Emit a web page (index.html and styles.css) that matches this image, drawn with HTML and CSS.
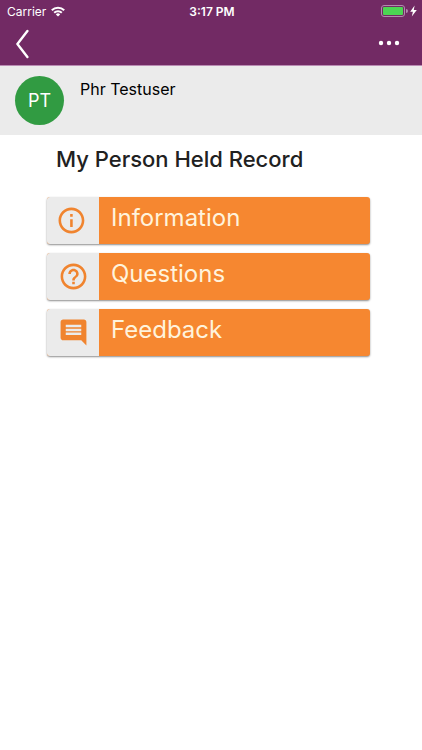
FILE: index.html
```html
<!DOCTYPE html>
<html lang="en">

<head>
    <title>My Person Held Record</title>
    <meta charset="utf-8">
    <meta name="viewport" content="width=device-width, initial-scale=1.0">
    <link rel="stylesheet" href="styles.css">
</head>

<body>

    <header>
        <div class="status">
            <div class="carrier">
                <span>Carrier</span>
                <svg width="14" height="11" viewBox="0 0 14 11" fill="none" stroke="#fff" stroke-width="2">
                    <path d="M.8 4.3a8.8 8.8 0 0 1 12.4 0M3.2 6.8a5.4 5.4 0 0 1 7.6 0" />
                    <path d="M7 10.6L4.8 8.4a3.1 3.1 0 0 1 4.4 0z" fill="#fff" stroke="none" />
                </svg>
            </div>
            <time>3:17 PM</time>
            <div class="power">
                <svg width="36" height="12" viewBox="0 0 36 12">
                    <rect x=".5" y=".5" width="23" height="11" rx="2.5" fill="none" stroke="#b28aae" />
                    <rect x="2" y="2" width="20" height="8" rx="1" fill="#4cd553" />
                    <path d="M25 4a2 2 0 0 1 0 4z" fill="#b28aae" />
                    <path d="M33.6.6L29.2 6.8h2.7l-1.1 4.8 5-6.6h-3z" fill="#fff" />
                </svg>
            </div>
        </div>
        <nav>
            <button class="nav_btn" aria-label="Back">
                <svg width="14" height="30" viewBox="0 0 14 30" fill="none" stroke="#fff" stroke-width="2.4" stroke-linecap="round" stroke-linejoin="round">
                    <path d="M12.4 2L2.4 15l10 13" />
                </svg>
            </button>
            <button class="nav_btn" aria-label="More">
                <svg width="22" height="8" viewBox="0 0 22 8" fill="#fff">
                    <circle cx="3" cy="3" r="2.2" />
                    <circle cx="11" cy="3" r="2.2" />
                    <circle cx="19" cy="3" r="2.2" />
                </svg>
            </button>
        </nav>
    </header>

    <section class="user">
        <div class="avatar">PT</div>
        <p class="name">Phr Testuser</p>
    </section>

    <main>
        <h1>My Person Held Record</h1>

        <a class="item" href="#information">
            <span class="icon">
                <svg width="31" height="31" viewBox="1.6 0 24 24">
                    <path d="M11 7h2v2h-2zm0 4h2v6h-2zm1-9C6.48 2 2 6.48 2 12s4.48 10 10 10 10-4.48 10-10S17.52 2 12 2zm0 18c-4.41 0-8-3.59-8-8s3.59-8 8-8 8 3.59 8 8-3.59 8-8 8z" />
                </svg>
            </span>
            <span class="label">Information</span>
        </a>
        <a class="item" href="#questions">
            <span class="icon">
                <svg width="31" height="31" viewBox="0 0 24 24">
                    <path d="M11 18h2v-2h-2v2zm1-16C6.48 2 2 6.48 2 12s4.48 10 10 10 10-4.48 10-10S17.52 2 12 2zm0 18c-4.41 0-8-3.59-8-8s3.59-8 8-8 8 3.59 8 8-3.59 8-8 8zm0-14c-2.21 0-4 1.79-4 4h2c0-1.1.9-2 2-2s2 .9 2 2c0 2-3 1.75-3 5h2c0-2.25 3-2.5 3-5 0-2.21-1.79-4-4-4z" />
                </svg>
            </span>
            <span class="label">Questions</span>
        </a>
        <a class="item" href="#feedback">
            <span class="icon">
                <svg width="31" height="31" viewBox="0 0 24 24">
                    <path d="M21.99 4c0-1.1-.89-2-1.99-2H4c-1.1 0-2 .9-2 2v12c0 1.1.9 2 2 2h14l4 4-.01-18zM18 14H6v-2h12v2zm0-3H6V9h12v2zm0-3H6V6h12v2z" />
                </svg>
            </span>
            <span class="label">Feedback</span>
        </a>
    </main>

</body>

</html>
```

FILE: styles.css
```css
* {
    box-sizing: border-box;
}

body {
    margin: 0;
    background-color: #fff;
    font-family: Inter, "Liberation Sans", sans-serif;
}

header {
    background-color: #722a64;
    color: #fff;
    border-bottom: 1px solid #b98bb3;
}

.status {
    display: grid;
    grid-template-columns: 1fr auto 1fr;
    align-items: center;
    height: 22px;
    padding: 0 5px 0 7px;
    font-size: 12px;
}

.carrier {
    display: flex;
    align-items: center;
    gap: 5px;
}

.status time {
    font-weight: 600;
}

.power {
    display: flex;
    justify-content: flex-end;
}

nav {
    display: flex;
    justify-content: space-between;
    align-items: center;
    height: 43px;
    padding: 0 14px;
}

.nav_btn {
    display: flex;
    align-items: center;
    height: 40px;
    padding: 0 8px 0 1px;
    border: none;
    background-color: transparent;
}

.user {
    display: flex;
    align-items: flex-start;
    gap: 16px;
    padding: 10px 15px;
    background-color: #ebebeb;
}

.avatar {
    display: flex;
    justify-content: center;
    align-items: center;
    width: 49px;
    height: 49px;
    border-radius: 50%;
    background-color: #319b42;
    color: #fff;
    font-size: 18px;
}

.name {
    margin: 3px 0 0;
    font-size: 16px;
    line-height: 20px;
    color: #000;
}

main {
    display: flex;
    flex-direction: column;
    gap: 9px;
    padding: 9px 52px 20px 47px;
}

h1 {
    margin: 0 0 14px;
    padding-left: 9px;
    font-size: 22px;
    font-weight: 500;
    line-height: 30px;
    color: #212121;
}

.item {
    display: flex;
    height: 47px;
    border-radius: 3px;
    overflow: hidden;
    background-color: #f68730;
    box-shadow: 0 1px 2px rgba(0, 0, 0, 0.45);
    text-decoration: none;
}

.icon {
    display: flex;
    justify-content: center;
    align-items: center;
    width: 52px;
    background-color: #ebebeb;
    fill: #f0842f;
}

.label {
    padding: 4px 12px;
    font-size: 24px;
    line-height: 34px;
    color: #fff3dc;
}
```
